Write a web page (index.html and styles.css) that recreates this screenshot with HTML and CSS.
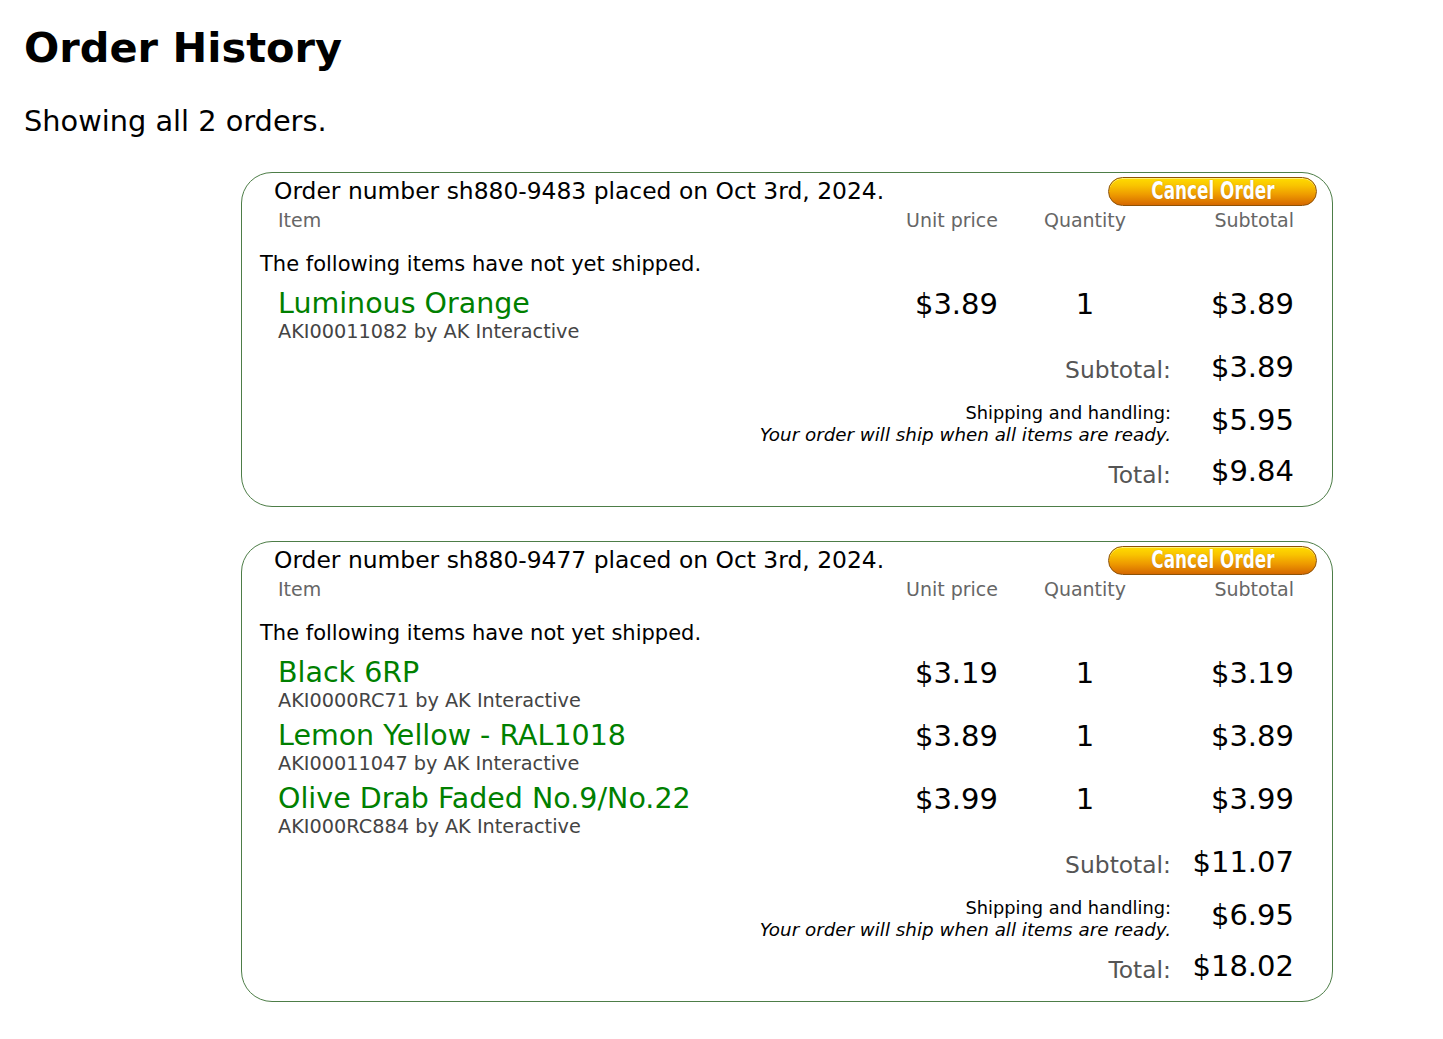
FILE: index.html
```html
<!DOCTYPE html>
<html lang="en">
<head>
<meta charset="utf-8">
<title>Order History</title>
<link rel="stylesheet" href="styles.css">
</head>
<body>
<main class="page">
  <h1 class="page-title">Order History</h1>
  <p class="order-count">Showing all 2 orders.</p>

  <section class="order-card">
    <header class="order-head">
      <h2 class="order-number">Order number sh880-9483 placed on Oct 3rd, 2024.</h2>
      <button class="cancel-btn" type="button"><span class="cancel-label">Cancel Order</span></button>
    </header>
    <div class="cols col-heads">
      <div class="col-item">Item</div>
      <div class="col-unit">Unit price</div>
      <div class="col-qty">Quantity</div>
      <div class="col-sub">Subtotal</div>
    </div>
    <p class="ship-note">The following items have not yet shipped.</p>
    <div class="items">
      <div class="cols item-row">
        <div class="col-item">
          <a class="item-name" href="#">Luminous Orange</a>
          <div class="item-sku">AKI00011082 by AK Interactive</div>
        </div>
        <div class="col-unit price">$3.89</div>
        <div class="col-qty price">1</div>
        <div class="col-sub price">$3.89</div>
      </div>
    </div>
    <div class="summary">
      <div class="sum-row sum-subtotal">
        <div class="sum-label">Subtotal:</div>
        <div class="sum-value">$3.89</div>
      </div>
      <div class="sum-row sum-shipping">
        <div class="sum-label">Shipping and handling:<br><em>Your order will ship when all items are ready.</em></div>
        <div class="sum-value">$5.95</div>
      </div>
      <div class="sum-row sum-total">
        <div class="sum-label">Total:</div>
        <div class="sum-value">$9.84</div>
      </div>
    </div>
  </section>

  <section class="order-card">
    <header class="order-head">
      <h2 class="order-number">Order number sh880-9477 placed on Oct 3rd, 2024.</h2>
      <button class="cancel-btn" type="button"><span class="cancel-label">Cancel Order</span></button>
    </header>
    <div class="cols col-heads">
      <div class="col-item">Item</div>
      <div class="col-unit">Unit price</div>
      <div class="col-qty">Quantity</div>
      <div class="col-sub">Subtotal</div>
    </div>
    <p class="ship-note">The following items have not yet shipped.</p>
    <div class="items">
      <div class="cols item-row">
        <div class="col-item">
          <a class="item-name" href="#">Black 6RP</a>
          <div class="item-sku">AKI0000RC71 by AK Interactive</div>
        </div>
        <div class="col-unit price">$3.19</div>
        <div class="col-qty price">1</div>
        <div class="col-sub price">$3.19</div>
      </div>
      <div class="cols item-row">
        <div class="col-item">
          <a class="item-name" href="#">Lemon Yellow - RAL1018</a>
          <div class="item-sku">AKI00011047 by AK Interactive</div>
        </div>
        <div class="col-unit price">$3.89</div>
        <div class="col-qty price">1</div>
        <div class="col-sub price">$3.89</div>
      </div>
      <div class="cols item-row">
        <div class="col-item">
          <a class="item-name" href="#">Olive Drab Faded No.9/No.22</a>
          <div class="item-sku">AKI000RC884 by AK Interactive</div>
        </div>
        <div class="col-unit price">$3.99</div>
        <div class="col-qty price">1</div>
        <div class="col-sub price">$3.99</div>
      </div>
    </div>
    <div class="summary">
      <div class="sum-row sum-subtotal">
        <div class="sum-label">Subtotal:</div>
        <div class="sum-value">$11.07</div>
      </div>
      <div class="sum-row sum-shipping">
        <div class="sum-label">Shipping and handling:<br><em>Your order will ship when all items are ready.</em></div>
        <div class="sum-value">$6.95</div>
      </div>
      <div class="sum-row sum-total">
        <div class="sum-label">Total:</div>
        <div class="sum-value">$18.02</div>
      </div>
    </div>
  </section>
</main>
</body>
</html>
```

FILE: styles.css
```css
html, body {
  margin: 0;
  padding: 0;
  background: #ffffff;
}

body {
  font-family: "DejaVu Sans", Verdana, sans-serif;
  color: #000000;
}

.page {
  padding: 23px 24px 30px 24px;
}

.page-title {
  margin: 0;
  font-size: 41.5px;
  line-height: 50px;
  font-weight: bold;
}

.order-count {
  margin: 31px 0 0 0;
  font-size: 28.8px;
  line-height: 34px;
}

/* one order */
.order-card {
  box-sizing: border-box;
  width: 1092px;
  margin: 34px 0 0 217px;
  padding: 0 38px 15px 36px;
  border: 1px solid #4d7d47;
  border-radius: 31px;
}

.order-head {
  display: flex;
  justify-content: space-between;
  align-items: flex-start;
  padding-top: 4px;
  margin: 0 -23px 0 -4px;
}

.order-number {
  margin: 0;
  font-size: 23.4px;
  line-height: 29px;
  font-weight: normal;
}

.cancel-btn {
  box-sizing: border-box;
  width: 209px;
  height: 29px;
  padding: 0;
  border: 1px solid #8e5206;
  border-radius: 15px;
  background: linear-gradient(to bottom, #ffdc00 0%, #f9c400 28%, #ee9a00 62%, #d56800 100%);
  box-shadow: inset 0 1px 0 rgba(255, 255, 200, 0.6);
  color: #ffffff;
  font-family: "Liberation Sans Narrow", "DejaVu Sans Condensed", "Liberation Sans", sans-serif;
  font-weight: bold;
  font-size: 24px;
  line-height: 27px;
  text-shadow: 0 0 1px rgba(120, 60, 0, 0.5);
  cursor: pointer;
}

.cancel-label {
  display: inline-block;
  transform: scaleX(0.78);
}

/* shared column grid */
.cols {
  display: grid;
  grid-template-columns: 1fr 118px 174px 122px;
}

.col-unit, .col-sub {
  text-align: right;
}

.col-qty {
  text-align: center;
}

.col-heads {
  margin-top: 3px;
  font-size: 19px;
  line-height: 22px;
  color: #666666;
}

.ship-note {
  margin: 20px 0 0 -18px;
  font-size: 21px;
  line-height: 26px;
}

.items {
  margin-top: 11px;
  display: flex;
  flex-direction: column;
  gap: 8px;
}

.item-name {
  display: block;
  font-size: 28.5px;
  line-height: 32px;
  color: #008000;
  text-decoration: none;
}

.item-sku {
  margin-top: 1px;
  font-size: 19.3px;
  line-height: 22px;
  color: #444444;
}

.price {
  font-size: 29px;
  line-height: 32px;
}

/* totals block */
.summary {
  margin-top: 8px;
}

.sum-row {
  display: grid;
  grid-template-columns: 1fr 122px;
  align-items: start;
}

.sum-label {
  text-align: right;
  padding-right: 1px;
}

.sum-value {
  text-align: right;
  font-size: 29px;
  line-height: 32px;
}

.sum-subtotal {
  height: 51px;
}

.sum-subtotal .sum-label,
.sum-total .sum-label {
  padding-top: 3px;
  font-size: 23.4px;
  line-height: 32px;
  color: #555555;
}

.sum-total .sum-label {
  padding-top: 4px;
}

.sum-shipping {
  height: 53px;
}

.sum-shipping .sum-label {
  font-size: 17.8px;
  line-height: 22px;
}

.sum-shipping .sum-label em {
  font-size: 18.3px;
  font-style: italic;
}

.sum-shipping .sum-value {
  padding-top: 2px;
}
```
